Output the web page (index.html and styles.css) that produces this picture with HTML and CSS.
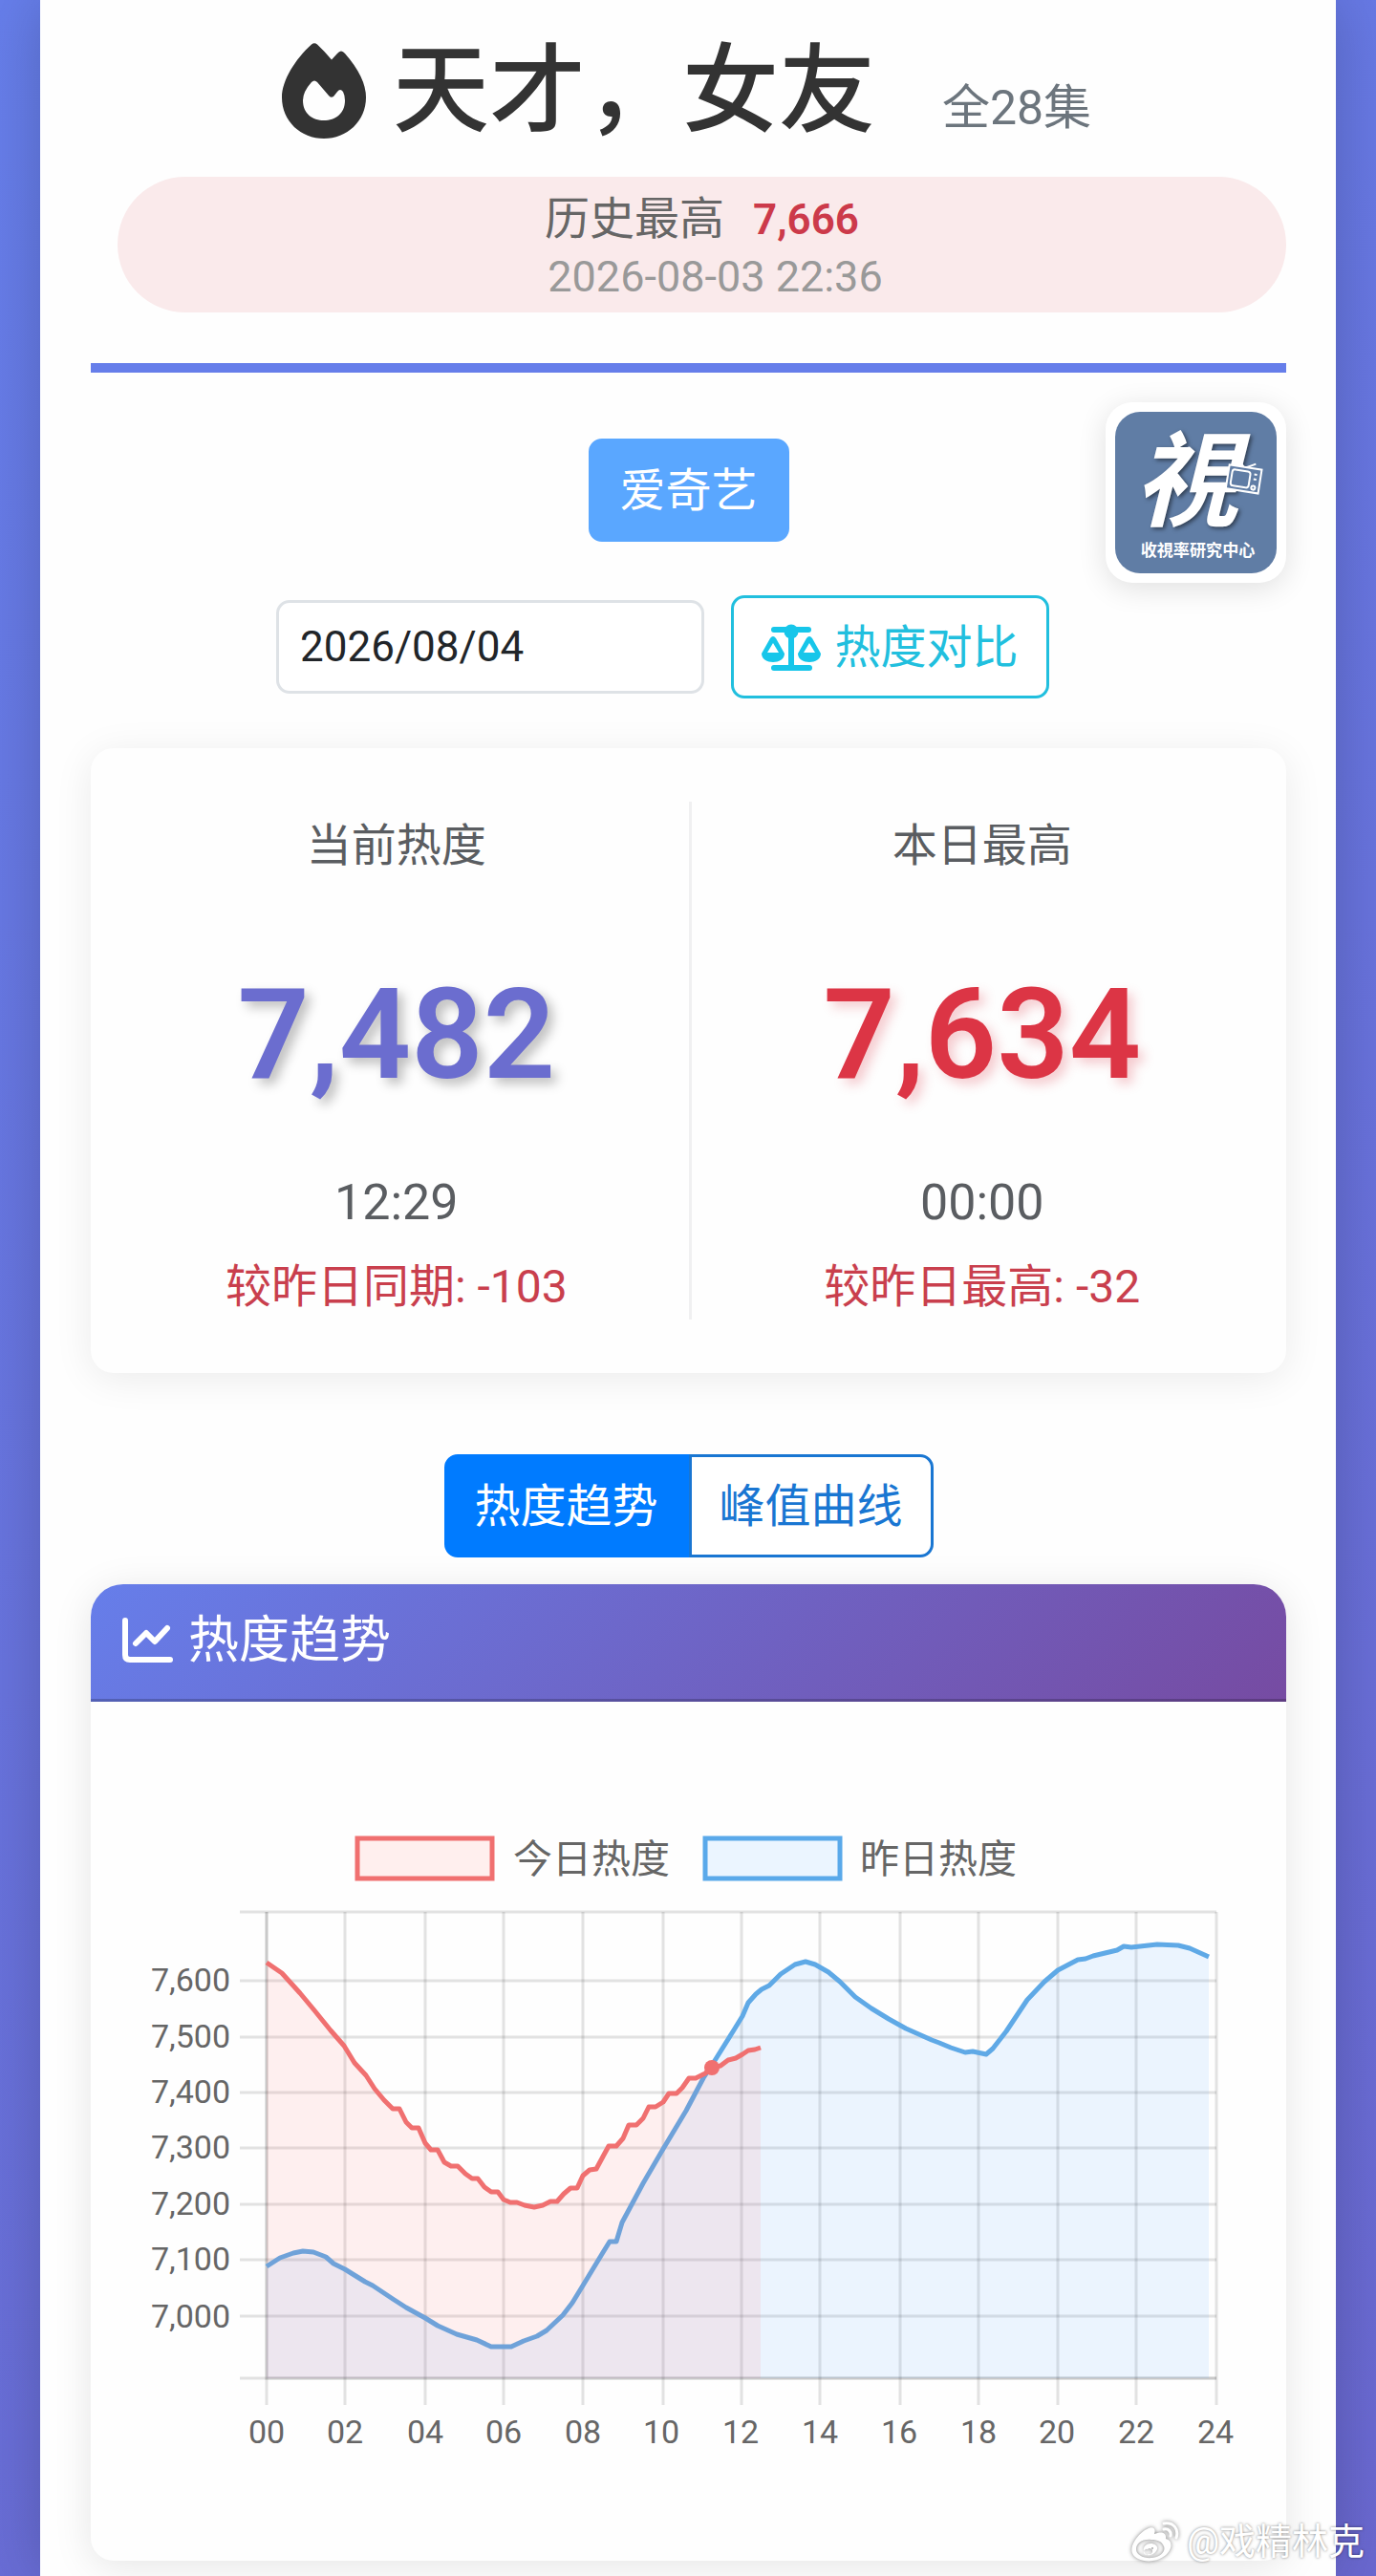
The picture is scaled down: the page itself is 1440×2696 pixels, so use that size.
FILE: index.html
```html
<!DOCTYPE html>
<html lang="zh-CN">
<head>
<meta charset="utf-8">
<meta name="viewport" content="width=device-width, initial-scale=1">
<title>天才，女友 - 热度趋势</title>
<link rel="stylesheet" href="styles.css">
</head>
<body>
<main class="container">
  <header class="header">
    <div class="title-row">
      <svg class="fire" viewBox="0 0 88 100" aria-hidden="true"><path fill="currentColor" fill-rule="evenodd" d="M31 1.500Q34-1 37 1.500Q45 9 52 17.500L58 11Q62 6 66 11Q88 36 88 57C88 82 68 100 44 100S0 82 0 57C0 39 14 17 31 1.500ZM31 41Q22 51 22 60C22 74 32 81 44 81S66 74 66 60Q66 55 64 51Q61 47 58 51L54 56Q51 58 49 55L37 41Q34 38 31 41Z"/></svg>
      <h1 class="title">天才，女友</h1>
      <span class="episodes">全28集</span>
    </div>
    <div class="record">
      <div class="record-top"><span>历史最高</span><strong>7,666</strong></div>
      <time class="record-time">2026-08-03 22:36</time>
    </div>
  </header>

  <section class="controls">
    <button class="btn platform" type="button">爱奇艺</button>
    <div class="date-row">
      <input class="date" type="text" value="2026/08/04" aria-label="日期">
      <button class="btn compare" type="button">
        <svg class="scale" viewBox="0 0 62 50" aria-hidden="true"><g fill="currentColor"><circle cx="31" cy="8" r="7.500"/><rect x="10" y="3" width="42" height="6" rx="3"/><rect x="28" y="8" width="6" height="38"/><rect x="10" y="43" width="43" height="6" rx="3"/><path fill-rule="evenodd" d="M9 15Q12 11 15 15L24 31C24 43 0 43 0 31ZM12 20L6 30H18Z"/><path fill-rule="evenodd" d="M47 15Q50 11 53 15L62 31C62 43 38 43 38 31ZM50 20L44 30H56Z"/></g></svg>
        <span>热度对比</span>
      </button>
    </div>
    <div class="logo">
      <svg class="logo-art" viewBox="0 0 168 168" role="img" aria-label="收视率研究中心">
        <rect width="168" height="168" rx="26" fill="#607da5"/>
        <g class="logo-shadow"><text class="logo-word" x="74" y="110">視</text></g>
        <g transform="translate(119 55) rotate(9)" fill="#607da5" stroke="#fff" stroke-width="2"><path d="M7 0L16 1L27-5M16 1L10-5" fill="none"/><rect width="34" height="25"/><rect x="4" y="4" width="19" height="17" rx="3"/><circle cx="28" cy="20" r="2"/><path d="M27 6H30M27 11H30"/></g>
        <text class="logo-name" x="86" y="150">收視率研究中心</text>
      </svg>
    </div>
  </section>

  <section class="stats">
    <div class="stat">
      <h2 class="stat-label">当前热度</h2>
      <div class="stat-value now">7,482</div>
      <div class="stat-time">12:29</div>
      <div class="stat-diff">较昨日同期: -103</div>
    </div>
    <div class="stat">
      <h2 class="stat-label">本日最高</h2>
      <div class="stat-value peak">7,634</div>
      <div class="stat-time">00:00</div>
      <div class="stat-diff">较昨日最高: -32</div>
    </div>
  </section>

  <div class="tabs">
    <button class="btn tab active" type="button">热度趋势</button>
    <button class="btn tab" type="button">峰值曲线</button>
  </div>

  <section class="chart-card">
    <h2 class="chart-head">
      <svg class="line-icon" viewBox="0 0 53 48" aria-hidden="true"><g fill="none" stroke="currentColor" stroke-width="6" stroke-linecap="round" stroke-linejoin="round"><path d="M3 3V39Q3 44 8 44H50"/><path d="M14 27L25 16L34 25L47 11"/></g></svg>
      <span>热度趋势</span>
    </h2>
    <svg class="chart" viewBox="95 1781 1251 899" role="img" aria-label="今日热度与昨日热度曲线">
      <g class="grid">
        <path d="M251 2001H1273M251 2073H1273M251 2132H1273M251 2190H1273M251 2248H1273M251 2307H1273M251 2365H1273M251 2424H1273M251 2489H1273"/>
        <path d="M279 2001V2517M361 2001V2517M445 2001V2517M527 2001V2517M610 2001V2517M694 2001V2517M776 2001V2517M858 2001V2517M942 2001V2517M1024 2001V2517M1107 2001V2517M1189 2001V2517M1273 2001V2517"/>
        <path d="M279 2001V2489H1273"/>
      </g>
      <path class="area-blue" d="M279 2489V2372L293 2363L307 2358L317 2356L328 2357L341 2362L349 2369L361 2375L382 2388L390 2392L411 2406L425 2415L445 2426L458 2434L478 2443L499 2449L514 2456H535L548 2450L562 2445L572 2439L589 2423L599 2410L610 2392L630 2359L638 2346H645L651 2326L673 2285L694 2249L718 2209L736 2175L749 2155L769 2123L777 2110L783 2096L791 2087L797 2082L805 2078L817 2066L832 2056L843 2053L853 2056L867 2064L879 2074L895 2090L912 2102L930 2113L948 2123L975 2135L983 2138L995 2143L1010 2148L1018 2147L1032 2150L1039 2144L1053 2126L1075 2093L1093 2074L1107 2062L1128 2051L1136 2050L1144 2047L1169 2041L1176 2037L1184 2038L1211 2035L1233 2036L1245 2039L1265 2048V2489Z"/>
      <path class="line-blue" d="M279 2372L293 2363L307 2358L317 2356L328 2357L341 2362L349 2369L361 2375L382 2388L390 2392L411 2406L425 2415L445 2426L458 2434L478 2443L499 2449L514 2456H535L548 2450L562 2445L572 2439L589 2423L599 2410L610 2392L630 2359L638 2346H645L651 2326L673 2285L694 2249L718 2209L736 2175L749 2155L769 2123L777 2110L783 2096L791 2087L797 2082L805 2078L817 2066L832 2056L843 2053L853 2056L867 2064L879 2074L895 2090L912 2102L930 2113L948 2123L975 2135L983 2138L995 2143L1010 2148L1018 2147L1032 2150L1039 2144L1053 2126L1075 2093L1093 2074L1107 2062L1128 2051L1136 2050L1144 2047L1169 2041L1176 2037L1184 2038L1211 2035L1233 2036L1245 2039L1265 2048"/>
      <path class="area-red" d="M279 2489V2054L295 2065L314 2086L329 2104L346 2125L360 2141L371 2159L383 2172L392 2186L402 2198L411 2207H418L425 2221L431 2227H438L445 2243L451 2250H458L465 2263L472 2267H479L487 2275L494 2280H500L507 2289L514 2294H521L527 2302L534 2305H541L549 2308L559 2310L568 2308L576 2304H583L590 2296L597 2290H604L610 2277L617 2271L624 2270L631 2257L637 2246H645L652 2238L658 2224H666L673 2217L679 2205H686L694 2200L700 2191H708L714 2185L721 2175H728L738 2170L745 2164L754 2162L762 2156L770 2154L777 2150L783 2146L790 2145L796 2143V2489Z"/>
      <path class="line-red" d="M279 2054L295 2065L314 2086L329 2104L346 2125L360 2141L371 2159L383 2172L392 2186L402 2198L411 2207H418L425 2221L431 2227H438L445 2243L451 2250H458L465 2263L472 2267H479L487 2275L494 2280H500L507 2289L514 2294H521L527 2302L534 2305H541L549 2308L559 2310L568 2308L576 2304H583L590 2296L597 2290H604L610 2277L617 2271L624 2270L631 2257L637 2246H645L652 2238L658 2224H666L673 2217L679 2205H686L694 2200L700 2191H708L714 2185L721 2175H728L738 2170L745 2164L754 2162L762 2156L770 2154L777 2150L783 2146L790 2145L796 2143"/>
      <circle cx="745" cy="2164" r="8" fill="#f07070"/>
      <rect class="key-red" x="374" y="1924" width="141" height="42"/>
      <rect class="key-blue" x="738" y="1924" width="141" height="42"/>
      <g class="legend"><text x="537" y="1960">今日热度</text><text x="900" y="1960">昨日热度</text></g>
      <g class="ylabels"><text x="241" y="2084">7,600</text><text x="241" y="2143">7,500</text><text x="241" y="2201">7,400</text><text x="241" y="2259">7,300</text><text x="241" y="2318">7,200</text><text x="241" y="2376">7,100</text><text x="241" y="2436">7,000</text></g>
      <g class="xlabels"><text x="279" y="2557">00</text><text x="361" y="2557">02</text><text x="445" y="2557">04</text><text x="527" y="2557">06</text><text x="610" y="2557">08</text><text x="692" y="2557">10</text><text x="775" y="2557">12</text><text x="858" y="2557">14</text><text x="941" y="2557">16</text><text x="1024" y="2557">18</text><text x="1106" y="2557">20</text><text x="1189" y="2557">22</text><text x="1272" y="2557">24</text></g>
    </svg>
  </section>
</main>
<div class="watermark">
  <svg class="weibo" viewBox="0 0 50 42" aria-hidden="true"><path fill="#fff" fill-rule="evenodd" d="M18 7C23 5 26 8 24 13C31 10 37 11 36 18C43 20 43 27 38 33C31 41 17 44 7 39C-1 35-1 28 3 21C7 14 13 9 18 7ZM21 19C11 18 5 23 5 29S13 39 22 38S36 31 34 26S28 19 21 19ZM20 23C26 23 29 27 26 31S17 37 14 33S14 23 20 23ZM17 29A3 3 0 1 0 18 34A3 3 0 1 0 17 29ZM22 27A1 1 0 1 0 22 29A1 1 0 1 0 22 27Z"/><path fill="none" stroke="#fff" stroke-width="3" stroke-linecap="round" d="M34 2C44 0 50 8 47 17M34 8C39 7 42 11 41 15"/></svg>
  <span>@戏精林克</span>
</div>
</body>
</html>
```
FILE: styles.css
```css
* { box-sizing: border-box; }
body {
  margin: 0;
  position: relative;
  min-height: 100vh;
  padding: 0 42px;
  overflow-x: hidden;
  background: linear-gradient(150deg, #667eea, #6a68d0);
  font-family: Roboto, "Noto Sans CJK SC", sans-serif;
  color: #333;
}
h1, h2 { margin: 0; font-weight: 400; }
button, input { font: inherit; margin: 0; }

.container {
  display: flow-root;
  min-height: 100vh;
  padding: 30px 52px 16px 53px;
  background: #fefefe;
  box-shadow: 0 0 60px rgba(0, 0, 0, .2);
}

.header { border-bottom: 10px solid #667eea; padding-bottom: 53px; }
.title-row {
  display: flex;
  justify-content: center;
  align-items: baseline;
  height: 155px;
  line-height: 132px;
}
.fire { width: 88px; height: 100px; align-self: flex-start; margin: 15px 28px 0 0; color: #333; }
.title { font-size: 101px; font-weight: 500; }
.episodes { margin-left: 70px; margin-right: 4px; font-size: 50px; color: #6c757d; }
.record {
  margin-left: 28px;
  height: 142px;
  padding-top: 14px;
  border-radius: 71px;
  background: #faeaeb;
  text-align: center;
}
.record-top {
  display: flex;
  justify-content: center;
  align-items: baseline;
  gap: 30px;
  font-size: 47px;
  line-height: 60px;
  color: #666;
}
.record-top strong { font-size: 44px; font-weight: 600; color: #cc3a4a; }
.record-time { display: block; margin-left: 28px; font-size: 45px; line-height: 60px; color: #999; }

.controls {
  position: relative;
  display: flex;
  flex-direction: column;
  align-items: center;
  gap: 56px;
  padding-top: 69px;
}
.btn {
  height: 108px;
  padding: 2px 0 0;
  border: 3px solid;
  border-radius: 14px;
  background: #fff;
  font-size: 48px;
  line-height: 60px;
  white-space: nowrap;
}
.platform { min-width: 210px; color: #fff; background: #5aa7ff; border-color: #5aa7ff; }
.date-row { display: flex; align-items: center; gap: 28px; margin-right: 54px; }
.date {
  width: 448px;
  height: 98px;
  padding: 0 22px;
  border: 3px solid #dee2e6;
  border-radius: 14px;
  background: #fff;
  color: #212529;
  font-size: 44px;
}
.compare { display: flex; align-items: center; justify-content: center; gap: 14px; width: 333px; color: #21bfde; }
.scale { width: 62px; height: 50px; color: #17c6ea; }
.logo {
  position: absolute;
  top: 31px;
  right: 0;
  padding: 10px;
  border-radius: 28px;
  background: #fff;
  box-shadow: 0 6px 30px rgba(0, 0, 0, .12);
}
.logo-art { display: block; width: 169px; height: 169px; }
.logo-shadow { filter: drop-shadow(2px 2px 2px rgba(0, 0, 0, .5)); }
.logo-word, .logo-name { fill: #fff; text-anchor: middle; font-family: "Noto Sans CJK TC", sans-serif; font-weight: 700; }
.logo-word { font-size: 108px; font-style: italic; }
.logo-name { font-size: 17px; }

.stats {
  display: grid;
  grid-template-columns: 1fr 1fr;
  margin-top: 52px;
  padding: 56px 0;
  border-radius: 24px;
  background: #fefefe;
  box-shadow: 0 6px 40px rgba(0, 0, 0, .08);
}
.stat { text-align: center; min-height: 542px; padding-top: 16px; color: #5a5d61; }
.stat:first-child { padding-left: 14px; }
.stat:last-child { padding-right: 14px; border-left: 3px solid #f0f0f1; }
.stat-label { font-size: 47px; line-height: 60px; }
.stat-value { margin-top: 84px; font-size: 132px; line-height: 168px; font-weight: 600; }
.now { color: #6b6dcf; text-shadow: 6px 6px 12px rgba(0, 0, 0, .25); }
.peak { color: #dc3545; text-shadow: 6px 6px 12px rgba(220, 53, 69, .25); }
.stat-time { margin-top: 60px; font-size: 52px; line-height: 64px; }
.stat-diff { margin-top: 26px; font-size: 48px; line-height: 60px; color: #c93f4d; }

.tabs { display: flex; justify-content: center; margin: 85px 0 28px; }
.tab { width: 256px; border-color: #1976d2; color: #1976d2; border-radius: 0 14px 14px 0; }
.tab.active { border-color: #007bff; background: #007bff; color: #fff; border-radius: 14px 0 0 14px; }

.chart-card {
  border-radius: 34px 34px 24px 24px;
  background: #fefefe;
  box-shadow: 0 6px 40px rgba(0, 0, 0, .1);
}
.chart-head {
  display: flex;
  align-items: center;
  gap: 16px;
  height: 123px;
  padding: 0 33px 2px;
  border-bottom: 3px solid rgba(0, 0, 0, .2);
  border-radius: 34px 34px 0 0;
  background: linear-gradient(135deg, #667eea, #764ba2) border-box;
  color: #fff;
  font-size: 53px;
  line-height: 64px;
}
.line-icon { width: 53px; height: 48px; }
.chart { display: block; width: 100%; height: auto; }
.grid path { fill: none; stroke: rgba(0, 0, 0, .11); stroke-width: 3; }
.area-blue { fill: rgba(84, 160, 255, .11); }
.area-red { fill: rgba(255, 107, 107, .1); }
.line-blue, .line-red { fill: none; stroke-width: 5; stroke-linejoin: round; }
.line-blue { stroke: #5fa9e6; }
.line-red { stroke: #f07070; }
.key-red { fill: #ffefee; stroke: #f07070; stroke-width: 5; }
.key-blue { fill: #ebf5ff; stroke: #5aa9ea; stroke-width: 5; }
.legend { font-size: 41px; fill: #666; }
.ylabels, .xlabels { font-size: 34px; fill: #666; }
.ylabels { text-anchor: end; }
.xlabels { text-anchor: middle; }

.watermark {
  position: absolute;
  right: 12px;
  bottom: 14px;
  display: flex;
  align-items: center;
  gap: 8px;
  color: #fff;
  font-size: 38px;
  line-height: 44px;
  text-shadow: 0 0 3px rgba(0, 0, 0, .5);
}
.weibo { width: 50px; height: 42px; filter: drop-shadow(0 0 2px rgba(0, 0, 0, .5)); }
```
